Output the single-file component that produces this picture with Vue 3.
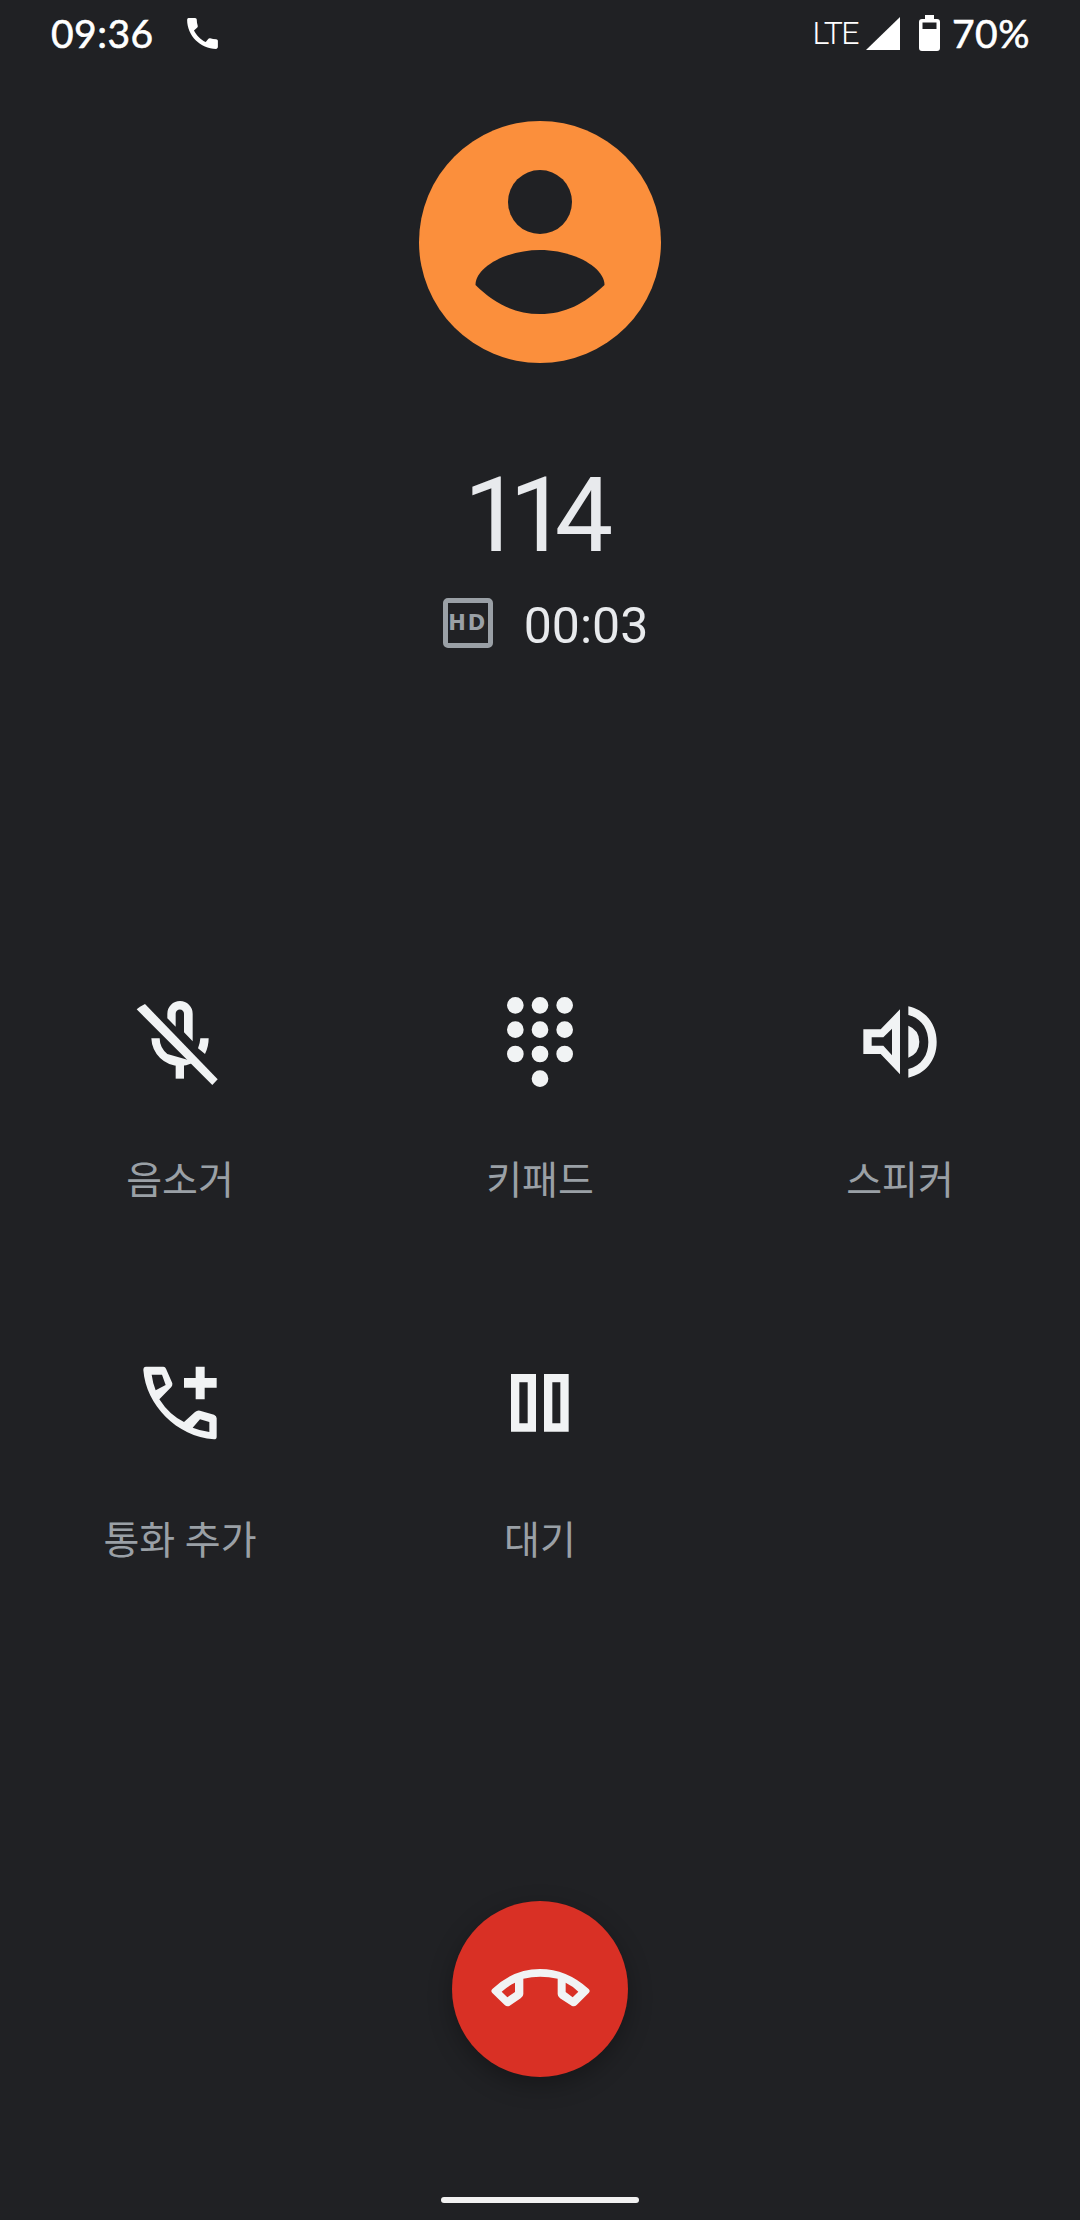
<template>
  <div class="screen">
    <div class="status-bar">
      <div class="status-left">
        <span class="clock">09:36</span>
        <svg class="status-call" viewBox="0 0 24 24"><path d="M20.01 15.38c-1.23 0-2.42-.2-3.53-.56-.35-.12-.74-.03-1.01.24l-1.57 1.97c-2.83-1.35-5.48-3.9-6.89-6.83l1.95-1.66c.27-.28.35-.67.24-1.02-.37-1.11-.56-2.3-.56-3.53 0-.54-.45-.99-.99-.99H4.19C3.65 3 3 3.24 3 3.99 3 13.28 10.73 21 20.01 21c.71 0 .99-.63.99-1.18v-3.45c0-.54-.45-.99-.99-.99z" /></svg>
      </div>
      <div class="status-right">
        <span class="lte">LTE</span>
        <svg class="signal" viewBox="0 0 34 33"><path d="M0 33 L34 0 V33 Z" /></svg>
        <svg class="battery" viewBox="0 0 21 36">
          <path fill-rule="evenodd" d="M6 0 H15 V4 H18 Q21 4 21 7 V33 Q21 36 18 36 H3 Q0 36 0 33 V7 Q0 4 3 4 H6 Z M3.5 7.5 V14 H17.500 V7.500 Z" />
        </svg>
        <span class="percent">70%</span>
      </div>
    </div>

    <div class="avatar">
      <svg viewBox="0 0 242 242" width="242" height="242">
        <circle cx="121" cy="81" r="32" />
        <path d="M56.500 164 C56.500 146 88 129 121 129 C154 129 185.500 146 185.500 164 C165 183 146 193 121 193 C96 193 76 183 56.500 164 Z" />
      </svg>
    </div>

    <div class="name">114</div>
    <div class="call-info">
      <span class="hd">HD</span>
      <span class="timer">00:03</span>
    </div>

    <div class="buttons">
      <div v-for="b in buttons" :key="b.label" class="call-btn">
        <svg class="btn-icon" :viewBox="b.box" width="120" height="120">
          <path v-for="(d, i) in b.paths" :key="i" :d="d" fill-rule="evenodd" />
        </svg>
        <span class="btn-label">{{ b.label }}</span>
      </div>
    </div>

    <div class="end-call">
      <svg viewBox="66 63 528 528" width="176" height="176">
        <path fill-rule="evenodd" d="M187 327 Q250 267 330 267 Q410 267 476 327 Q482 333 476 339 L440 375 Q434 381 426 378 L390 355 Q383 350 383 342 V296 Q330 285 280 296 V342 Q280 350 272 355 L238 378 Q230 381 224 375 L187 339 Q181 333 187 327 Z M215 335 L232 352 L255 336 V308 Q234 318 215 335 Z M445 335 L428 352 L407 336 V308 Q428 318 445 335 Z" />
      </svg>
    </div>

    <div class="nav-pill"></div>
  </div>
</template>

<script setup>
const dot = (x, y) => `M${x - 25} ${y} a25 25 0 1 0 50 0 a25 25 0 1 0 -50 0 Z`

const keypad = [76, 149, 222]
  .flatMap((y) => [106, 180, 254].map((x) => dot(x, y)))
  .concat(dot(180, 296))
  .join(' ')

const buttons = [
  {
    label: '음소거',
    box: '30 0 360 360',
    paths: [
      'M90 80 L105 72 L323 298 L307 315 L80 88 Z',
      'M172 115 V101 A38 38 0 0 1 248 101 V184 L222 157 V101 A12.500 12.500 0 0 0 197 101 V140 Z',
      'M124 175 H149 A61 61 0 0 0 172 222 L235 240 L246 250 A86 86 0 0 1 210 258 A86 86 0 0 1 124 175 Z',
      'M197 240 H222 V296 H197 Z',
      'M296 175 H271 Q270 190 264 205 L285 222 Q296 200 296 175 Z',
    ],
  },
  { label: '키패드', box: '0 0 360 360', paths: [keypad] },
  {
    label: '스피커',
    box: '0 0 360 360',
    paths: [
      'M70 148 H122 L180 88 V283 L122 222 H70 Z M95 172 V197 H130 L156 226 V146 L130 172 Z',
      'M205 137 Q238 150 238 185 Q238 220 205 233 Z',
      'M205 79 C255 90 290 130 290 186 C290 242 255 282 205 293 V267 C245 257 265 225 265 186 C265 147 245 115 205 105 Z',
    ],
  },
  {
    label: '통화 추가',
    box: '0 0 360 360',
    paths: [
      'M78 80 H130 Q136 80 138 86 L157 130 Q158 136 154 141 L118 178 Q148 225 192 246 L225 216 Q232 210 240 212 L282 224 Q290 227 290 235 V290 Q290 298 282 298 C170 290 78 195 70 90 Q70 80 78 80 Z M95 104 Q98 128 107 151 L137 135 L126 104 Z M218 263 Q240 272 268 276 V246 L240 238 Z',
      'M227 80 H254 V114 H290 V143 H254 V178 H227 V143 H192 V114 H227 Z',
    ],
  },
  {
    label: '대기',
    box: '0 0 360 360',
    paths: [
      'M93 102 H168 V275 H93 Z M118 127 V250 H143 V127 Z',
      'M192 102 H266 V275 H192 Z M217 127 V250 H241 V127 Z',
    ],
  },
]
</script>

<style>
html,
body {
  margin: 0;
  background: #202124;
}
</style>

<style scoped>
.screen {
  width: 1080px;
  height: 2220px;
  background: #202124;
  display: flex;
  flex-direction: column;
  align-items: center;
  overflow: hidden;
  font-family: Roboto, "Noto Sans CJK KR", sans-serif;
}

.status-bar {
  width: 100%;
  height: 66px;
  box-sizing: border-box;
  padding: 0 50px 0 51px;
  display: flex;
  justify-content: space-between;
  align-items: center;
  color: #fff;
}

.status-left,
.status-right {
  display: flex;
  align-items: center;
}

.clock,
.percent {
  font-family: Lato, sans-serif;
  font-size: 39px;
  font-weight: 400;
  -webkit-text-stroke: 0.6px #fff;
  letter-spacing: 0.5px;
  line-height: 66px;
}

.status-call {
  width: 41px;
  height: 41px;
  margin-left: 28px;
  fill: #fff;
}

.lte {
  font-size: 32px;
  font-weight: 300;
  letter-spacing: -1.500px;
  line-height: 66px;
}

.signal {
  width: 34px;
  height: 33px;
  margin: 0 19px 0 8px;
  fill: #fff;
}

.battery {
  width: 21px;
  height: 36px;
  margin-right: 12px;
  fill: #fff;
}

.avatar {
  width: 242px;
  height: 242px;
  margin-top: 55px;
  border-radius: 50%;
  background: #fb8f3c;
  fill: #202124;
}

.avatar svg {
  display: block;
}

.name {
  margin-top: 93px;
  margin-right: 16px;
  height: 120px;
  line-height: 120px;
  font-size: 104px;
  font-weight: 400;
  letter-spacing: -13px;
  color: #e8eaed;
}

.call-info {
  margin-top: 17px;
  height: 60px;
  display: flex;
  align-items: center;
  gap: 31px;
  margin-left: 11px;
}

.hd {
  width: 50px;
  height: 50px;
  box-sizing: border-box;
  border: 5px solid #9aa0a6;
  border-radius: 5px;
  display: flex;
  justify-content: center;
  align-items: center;
  font-family: "DejaVu Sans", sans-serif;
  font-weight: 700;
  font-size: 21px;
  letter-spacing: 2px;
  color: #9aa0a6;
}

.timer {
  font-size: 50px;
  color: #e8eaed;
  position: relative;
  top: 3px;
}

.buttons {
  margin-top: 327px;
  width: 100%;
  display: grid;
  grid-template-columns: repeat(3, 360px);
  grid-auto-rows: 360px;
}

.call-btn {
  display: flex;
  flex-direction: column;
  align-items: center;
}

.btn-icon {
  display: block;
  fill: #f1f3f4;
}

.btn-label {
  margin-top: 55px;
  height: 52px;
  line-height: 52px;
  font-size: 39px;
  color: #9aa0a6;
}

.end-call {
  width: 176px;
  height: 176px;
  margin-top: 201px;
  border-radius: 50%;
  background: #d93025;
  box-shadow: 0 8px 24px rgba(0, 0, 0, 0.3);
  fill: #f1f3f4;
}

.end-call svg {
  display: block;
}

.nav-pill {
  width: 198px;
  height: 6px;
  margin-top: 120px;
  border-radius: 3px;
  background: #f1f1f1;
}
</style>
